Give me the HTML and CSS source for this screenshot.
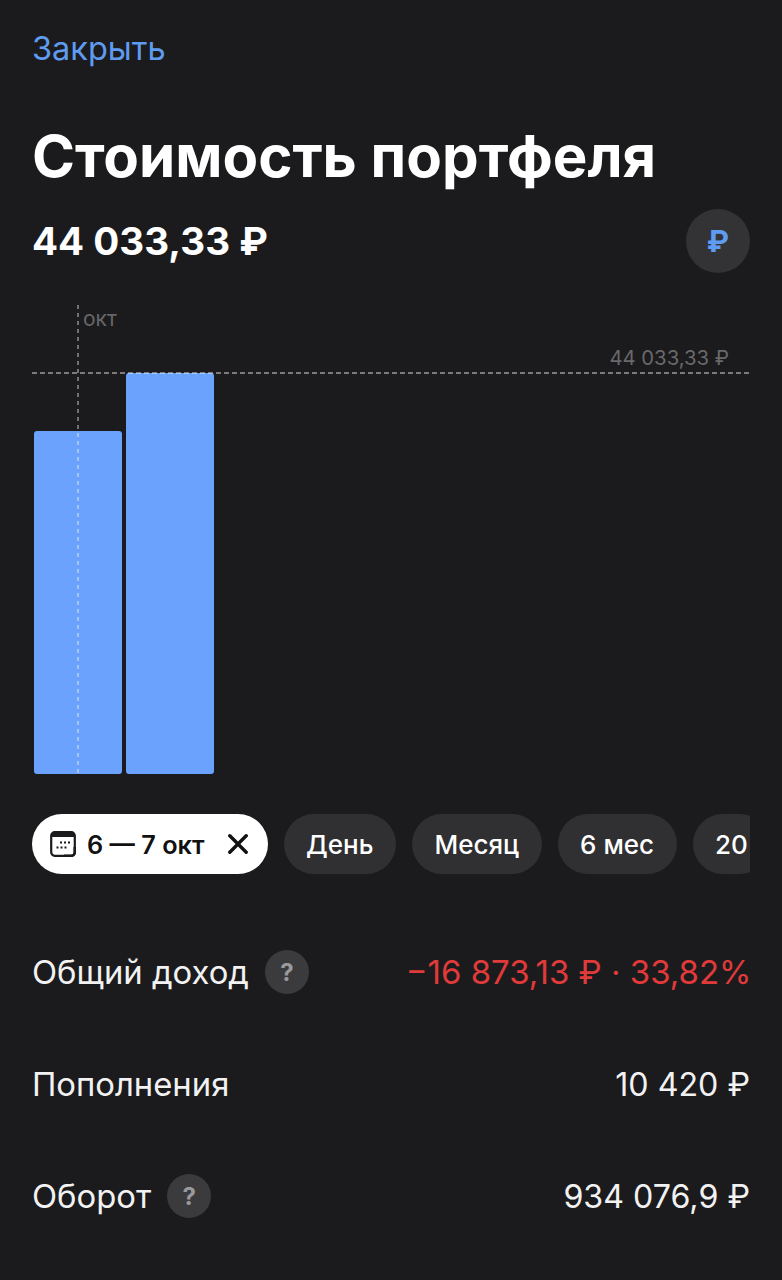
FILE: index.html
```html
<!DOCTYPE html>
<html lang="ru">
<head>
<meta charset="utf-8">
<title>Стоимость портфеля</title>
<link rel="stylesheet" href="styles.css">
</head>
<body>
<main class="screen">
  <a class="close">Закрыть</a>
  <h1 class="title">Стоимость портфеля</h1>
  <div class="value-row">
    <div class="value">44 033,33 ₽</div>
    <div class="currency">₽</div>
  </div>
  <div class="chart">
    <div class="month">окт</div>
    <div class="vline"></div>
    <div class="max-label">44 033,33 ₽</div>
    <div class="hline"></div>
    <div class="bars">
      <div class="bar bar-a"></div>
      <div class="bar bar-b"></div>
    </div>
  </div>
  <div class="chips">
    <div class="chip chip-active">
      <svg class="cal" viewBox="0 0 26 26" width="26" height="26" aria-hidden="true">
        <rect x="1.2" y="1.2" width="23.6" height="23.6" rx="3.5" fill="none" stroke="#1b1b1d" stroke-width="2.2"/>
        <path d="M1.2 6V4.7a3.5 3.5 0 0 1 3.5-3.5h16.6a3.5 3.5 0 0 1 3.5 3.5V6z" fill="#1b1b1d"/>
        <path d="M14 24.8h7.3a3.5 3.5 0 0 0 3.5-3.5V16" fill="none" stroke="#1b1b1d" stroke-width="2.6"/>
        <g fill="#1b1b1d">
          <rect x="10" y="10.5" width="2" height="2"/><rect x="14" y="10.5" width="2" height="2"/><rect x="18" y="10.5" width="2" height="2"/>
          <rect x="6.5" y="15.5" width="2" height="2"/><rect x="10.5" y="15.5" width="2" height="2"/><rect x="14.5" y="15.5" width="2" height="2"/>
        </g>
      </svg>
      <span>6 — 7 окт</span>
      <svg class="x" viewBox="0 0 20 20" width="20" height="20" aria-hidden="true">
        <path d="M1.8 1.8l16.4 16.4M18.2 1.8L1.8 18.2" fill="none" stroke="#111" stroke-width="3.4" stroke-linecap="round"/>
      </svg>
    </div>
    <div class="chip">День</div>
    <div class="chip">Месяц</div>
    <div class="chip">6 мес</div>
    <div class="chip">20</div>
  </div>
  <div class="rows">
    <div class="row">
      <div class="row-label">Общий доход <span class="hint">?</span></div>
      <div class="row-value negative">−16 873,13 ₽ · 33,82%</div>
    </div>
    <div class="row">
      <div class="row-label">Пополнения</div>
      <div class="row-value">10 420 ₽</div>
    </div>
    <div class="row">
      <div class="row-label">Оборот <span class="hint">?</span></div>
      <div class="row-value">934 076,9 ₽</div>
    </div>
  </div>
</main>
</body>
</html>
```
FILE: styles.css
```css
* { box-sizing: border-box; }
html, body { margin: 0; height: 100%; }
body {
  background: #1b1b1d;
  color: #fff;
  font-family: Inter, "Noto Sans", sans-serif;
  overflow: hidden;
}
.screen { padding: 28px 32px 0; height: 1280px; overflow: hidden; }
.close { display: block; color: #5f9bf0; font-size: 32.5px; line-height: 42px; }
.title { margin: 52px 0 0; font-size: 58.2px; line-height: 68px; font-weight: 700; white-space: nowrap; }
.value-row { display: flex; justify-content: space-between; align-items: center; margin-top: 19px; height: 64px; }
.value { font-size: 38.6px; font-weight: 700; }
.currency {
  width: 64px; height: 64px; border-radius: 50%;
  background: #333336; color: #5f9bf0;
  display: flex; align-items: center; justify-content: center;
  font-size: 30px; font-weight: 700;
}
.chart { position: relative; height: 469px; margin-top: 32px; }
.month { position: absolute; left: 51px; top: 3px; font-size: 21px; line-height: 22px; color: #66666a; }
.vline {
  position: absolute; left: 45px; top: 0; bottom: 0; width: 2px; z-index: 2;
  background: repeating-linear-gradient(180deg, rgba(255,255,255,.38) 0 4px, transparent 4px 8px);
}
.max-label { position: absolute; right: 21px; top: 41px; font-size: 20.3px; line-height: 24px; color: #69696b; }
.hline {
  position: absolute; left: 0; right: 0; top: 67px; height: 2px; z-index: 2;
  background: repeating-linear-gradient(90deg, rgba(255,255,255,.42) 0 5px, transparent 5px 8px);
}
.bars { position: absolute; left: 2px; bottom: 0; display: flex; align-items: flex-end; gap: 4px; }
.bar { width: 88px; background: #6aa2fd; border-radius: 3px; }
.bar-a { height: 343px; }
.bar-b { height: 401px; }
.chips { display: flex; gap: 16px; margin-top: 40px; overflow: hidden; }
.chip {
  flex: none; height: 60px; padding: 0 22.5px; border-radius: 30px;
  background: #303033; color: #fff;
  display: flex; align-items: center;
  font-size: 26px; font-weight: 500;
}
.chip-active { background: #fff; color: #111; padding: 0 20px 0 18px; gap: 11px; font-size: 25.3px; font-weight: 600; }
.chip-active .x { margin-left: 12px; }
.rows { margin-top: 42px; }
.row { display: flex; justify-content: space-between; align-items: center; height: 112px; }
.row-label { display: flex; align-items: center; gap: 16px; font-size: 32.8px; color: #f2f2f2; }
.row-value { font-size: 32.2px; color: #f2f2f2; }
.row-value.negative { color: #e03a3a; font-size: 33px; margin-right: -1.5px; }
.hint {
  width: 44px; height: 44px; border-radius: 50%;
  background: #3b3b3e; color: #9a9a9d;
  display: flex; align-items: center; justify-content: center;
  font-size: 24px; font-weight: 700;
}
```
